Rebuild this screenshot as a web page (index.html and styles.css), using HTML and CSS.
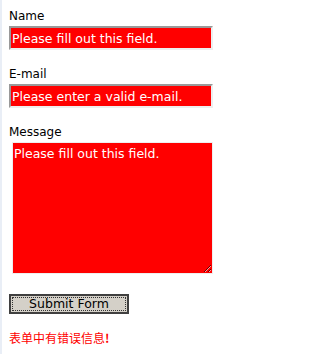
FILE: index.html
```html
<!DOCTYPE html>
<html>
<head>
<meta charset="utf-8">
<link rel="stylesheet" href="styles.css">
</head>
<body>
<form class="form">
  <div class="field">
    <label class="label">Name</label>
    <input class="input" type="text" value="Please fill out this field.">
  </div>
  <div class="field">
    <label class="label">E-mail</label>
    <input class="input" type="text" value="Please enter a valid e-mail.">
  </div>
  <div class="field">
    <label class="label">Message</label>
    <textarea class="textarea">Please fill out this field.</textarea>
  </div>
  <button class="button" type="button">Submit Form</button>
  <p class="error">表单中有错误信息<span class="bang">!</span></p>
</form>
</body>
</html>
```
FILE: styles.css
```css
html {
  background: #fff;
  border-left: 2px solid #e9eef6;
}
body {
  margin: 8px 8px 8px 7px;
  font-family: "DejaVu Sans", Verdana, sans-serif;
  color: #000;
}
.form {
  display: flex;
  flex-direction: column;
  align-items: flex-start;
}
.field {
  display: flex;
  flex-direction: column;
  align-items: flex-start;
  margin-bottom: 16px;
}
.label {
  font-size: 12px;
  line-height: 16px;
  margin-bottom: 2px;
}
.input {
  box-sizing: border-box;
  width: 204px;
  height: 24px;
  margin: 0;
  padding: 0 1px;
  border: 2px solid;
  border-color: #999 #eee #eee #999;
  background: #f00;
  color: #fff;
  font-family: "DejaVu Sans", Verdana, sans-serif;
  font-size: 12.5px;
  outline: none;
}
.textarea {
  box-sizing: border-box;
  width: 201px;
  height: 132px;
  margin: 0 0 0 3px;
  padding: 3px 1px;
  border: 1px solid #eee;
  background: #f00;
  color: #fff;
  font-family: "DejaVu Sans", Verdana, sans-serif;
  font-size: 12.5px;
  line-height: 16px;
  resize: both;
  overflow: hidden;
}
.field:nth-child(3) {
  margin-bottom: 20px;
}
.button {
  box-sizing: border-box;
  width: 120px;
  height: 20px;
  margin: 0;
  padding: 0;
  background: #d4d0c8;
  border: 2px solid #404040;
  outline: 1px dotted #333;
  outline-offset: -4px;
  font-family: "DejaVu Sans", Verdana, sans-serif;
  font-size: 12.5px;
  line-height: 16px;
  color: #000;
}
.error {
  margin: 16px 0 0;
  color: #f00;
  font-family: "Noto Sans CJK SC", sans-serif;
  font-size: 12px;
  line-height: 16px;
}
.bang {
  font-weight: bold;
}
```
